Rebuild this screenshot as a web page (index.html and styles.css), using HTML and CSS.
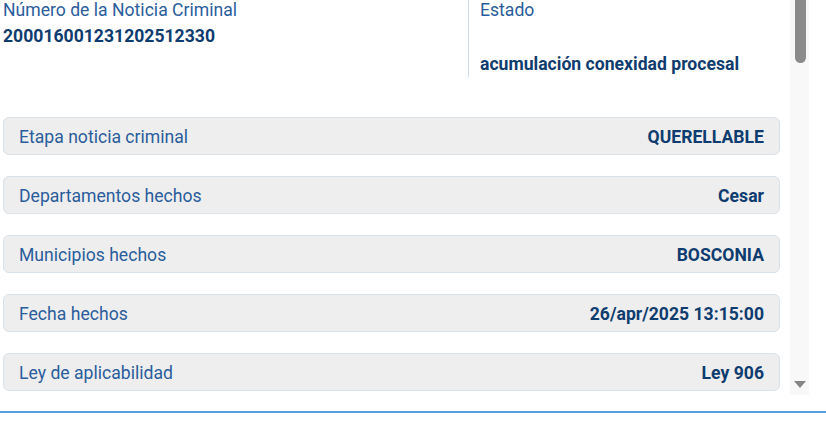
FILE: index.html
```html
<!DOCTYPE html>
<html lang="es">
<head>
<meta charset="utf-8">
<link rel="stylesheet" href="styles.css">
</head>
<body>
<div class="page">
  <div class="panel">
    <div class="content">
      <div class="header">
        <div class="hcol">
          <div class="hlabel">Número de la Noticia Criminal</div>
          <div class="hvalue">200016001231202512330</div>
        </div>
        <div class="hcol hcol-right">
          <div class="hlabel">Estado</div>
          <div class="hvalue estado">acumulación conexidad procesal</div>
        </div>
      </div>
      <div class="rows">
        <div class="row"><span class="label">Etapa noticia criminal</span><span class="value">QUERELLABLE</span></div>
        <div class="row"><span class="label">Departamentos hechos</span><span class="value">Cesar</span></div>
        <div class="row"><span class="label">Municipios hechos</span><span class="value">BOSCONIA</span></div>
        <div class="row"><span class="label">Fecha hechos</span><span class="value">26/apr/2025 13:15:00</span></div>
        <div class="row"><span class="label">Ley de aplicabilidad</span><span class="value">Ley 906</span></div>
      </div>
    </div>
    <div class="scrollbar">
      <div class="thumb"></div>
      <div class="arrow"></div>
    </div>
  </div>
  <div class="divider"></div>
</div>
</body>
</html>
```
FILE: styles.css
```css
* { box-sizing: border-box; }
html, body { margin: 0; padding: 0; background: #fff; }
body { font-family: Roboto, "Noto Sans", Arial, sans-serif; font-size: 17.6px; }
.page { width: 826px; height: 429px; overflow: hidden; }
.panel { display: flex; height: 395px; }
.content { flex: 1; padding: 0 10px 0 3px; overflow: hidden; }
.scrollbar { width: 19px; margin-right: 17px; background: #f8f8f8; display: flex; flex-direction: column; justify-content: space-between; align-items: center; }
.thumb { width: 11px; height: 63px; background: #8b8b8b; border-radius: 0 0 6px 6px; margin-left: 1px; }
.arrow { width: 0; height: 0; border-left: 6px solid transparent; border-right: 6px solid transparent; border-top: 7px solid #858585; margin-bottom: 7px; margin-left: 1px; }
.divider { height: 2px; background: #58a0e0; margin-top: 16px; }
.header { display: grid; grid-template-columns: 465px 1fr; height: 77px; }
.hcol { display: flex; flex-direction: column; }
.hcol-right { border-left: 1px solid #cfdbe7; padding-left: 11px; }
.hlabel { color: #2a5d9b; line-height: 21px; margin-top: 0; }
.hvalue { color: #0f3c6e; font-weight: 700; line-height: 21px; margin-top: 5px; }
.hvalue.estado { margin-top: 33px; }
.rows { display: flex; flex-direction: column; gap: 21px; margin-top: 40px; width: 777px; }
.row { height: 38px; border: 1px solid #d9e1e9; border-radius: 6px; background: #eeeeee; display: flex; align-items: center; justify-content: space-between; padding: 2px 15px 0; }
.label { color: #2a5d9b; }
.value { color: #0f3c6e; font-weight: 700; }
```
